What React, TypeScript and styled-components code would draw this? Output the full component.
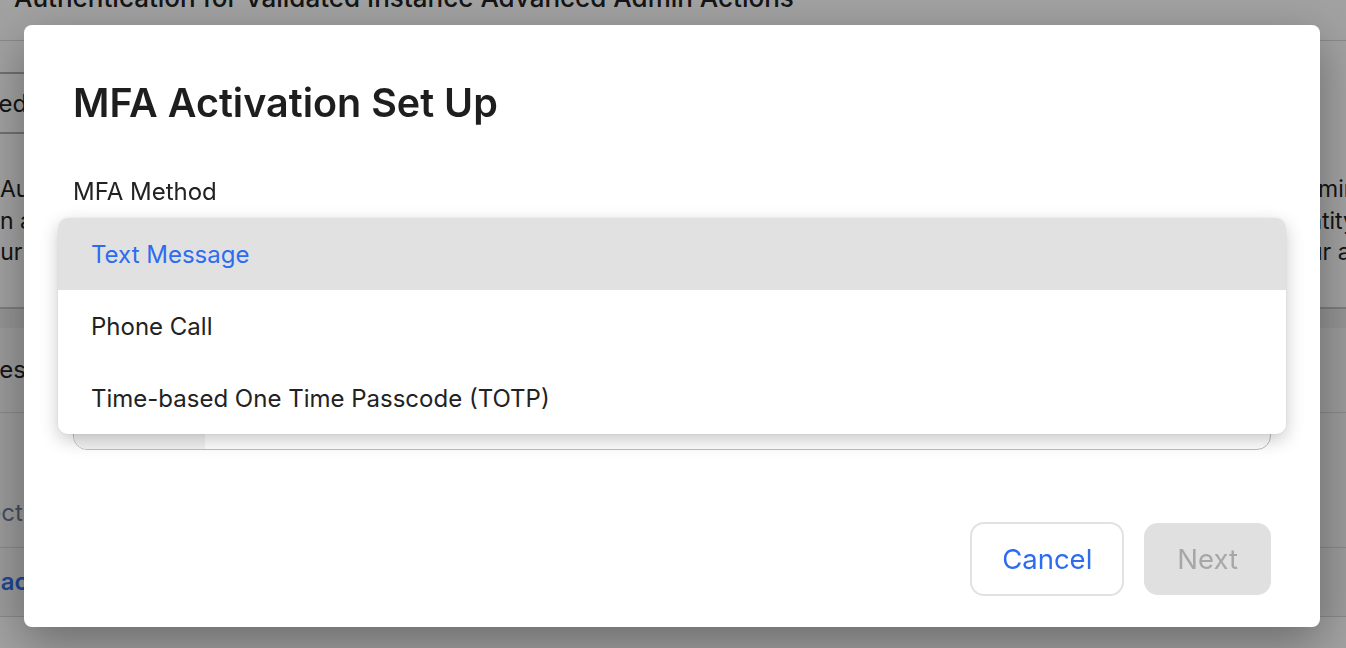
import React from "react";
import styled, { createGlobalStyle } from "styled-components";

const GlobalStyle = createGlobalStyle`
  html, body {
    margin: 0;
    padding: 0;
  }
  body {
    font-family: Inter, "Noto Sans", sans-serif;
    color: #222;
    background: #fff;
    overflow: hidden;
  }
  * {
    box-sizing: border-box;
  }
`;

/* page behind the dialog */

const Page = styled.div`
  width: 1346px;
  height: 648px;
  overflow: hidden;
  background: #fff;
`;

const PageHeader = styled.header`
  height: 41px;
  padding-left: 14px;
  border-bottom: 1px solid #d6d9de;
  overflow: hidden;
`;

const PageTitle = styled.h1`
  margin: -18px 0 0;
  font-size: 26px;
  line-height: 32px;
  font-weight: 500;
  white-space: nowrap;
`;

const StatusRow = styled.div`
  display: flex;
  margin-top: 31px;
`;

const StatusPill = styled.span`
  display: inline-flex;
  align-items: center;
  height: 62px;
  margin-left: -90px;
  padding: 0 24px;
  border: 2px solid #aeb1b8;
  border-radius: 31px;
  font-size: 24px;
`;

const Description = styled.div`
  margin-top: 40px;
  font-size: 23px;
  line-height: 31.5px;
`;

const DescLine = styled.div`
  display: flex;
  justify-content: space-between;
  white-space: nowrap;
`;

const DescPart = styled.span<{ $shift?: number; $end?: number }>`
  margin-left: ${(p) => p.$shift ?? 0}px;
  margin-right: ${(p) => p.$end ?? 0}px;
`;

const TabStrip = styled.div`
  margin-top: 38px;
  height: 21px;
  border-top: 2px solid #c4c7cc;
  background: #ebebeb;
`;

const Table = styled.div`
  background: #f5f5f5;
`;

const Row = styled.div<{ $h: number; $align?: string }>`
  display: flex;
  align-items: ${(p) => p.$align ?? "center"};
  height: ${(p) => p.$h}px;
  padding-bottom: ${(p) => (p.$align === "flex-end" ? 20 : 0)}px;
  border-bottom: 1px solid #d8d8d8;
  font-size: 24px;
  white-space: nowrap;
`;

const Cell = styled.span<{ $shift: number; $tone?: "muted" | "link" }>`
  margin-left: ${(p) => p.$shift}px;
  color: ${(p) =>
    p.$tone === "muted" ? "#6f7d96" : p.$tone === "link" ? "#2f6fea" : "#222"};
  font-weight: ${(p) => (p.$tone === "link" ? 600 : 400)};
`;

/* dialog */

const Overlay = styled.div`
  position: fixed;
  inset: 0;
  display: flex;
  align-items: flex-start;
  padding: 25px 0 0 24px;
  background: rgba(0, 0, 0, 0.37);
`;

const Modal = styled.div`
  display: flex;
  flex-direction: column;
  width: 1296px;
  height: 602px;
  padding: 54px 49px 31px;
  background: #fff;
  border-radius: 8px;
  box-shadow: 0 16px 48px rgba(0, 0, 0, 0.34);
`;

const ModalTitle = styled.h2`
  margin: 0;
  font-size: 39.5px;
  line-height: 48px;
  font-weight: 600;
  color: #1e1e1e;
`;

const Form = styled.div`
  position: relative;
  display: flex;
  flex-direction: column;
  margin-top: 51px;
`;

const Label = styled.label<{ $gap?: number }>`
  display: block;
  margin-top: ${(p) => p.$gap ?? 0}px;
  font-size: 24px;
  line-height: 28px;
  color: #222;
`;

const Field = styled.div`
  display: flex;
  height: 56px;
  margin-top: 14px;
  border: 1.5px solid #bdbdbd;
  border-radius: 14px;
  overflow: hidden;
`;

const CountrySlot = styled.div`
  width: 131px;
  background: #f3f3f3;
`;

const Menu = styled.ul`
  position: absolute;
  top: 40px;
  left: -15px;
  right: -15px;
  margin: 0;
  padding: 0;
  list-style: none;
  background: #fff;
  border-radius: 10px;
  overflow: hidden;
  box-shadow: 0 6px 18px rgba(0, 0, 0, 0.22), 0 0 2px rgba(0, 0, 0, 0.08);
`;

const MenuItem = styled.li<{ $active?: boolean }>`
  display: flex;
  align-items: center;
  height: 72px;
  padding-left: 33px;
  font-size: 24px;
  color: ${(p) => (p.$active ? "#2d6cf0" : "#222")};
  background: ${(p) => (p.$active ? "#e1e1e1" : "#fff")};
`;

const Footer = styled.div`
  display: flex;
  justify-content: flex-end;
  align-items: center;
  gap: 20px;
  margin-top: auto;
`;

const Button = styled.button<{ $variant: "secondary" | "disabled" }>`
  height: ${(p) => (p.$variant === "secondary" ? 74 : 72)}px;
  padding: 0 ${(p) => (p.$variant === "secondary" ? 30 : 33)}px;
  border: ${(p) => (p.$variant === "secondary" ? "2px solid #e2e2e2" : "none")};
  border-radius: 14px;
  background: ${(p) => (p.$variant === "secondary" ? "#fff" : "#e0e0e0")};
  color: ${(p) => (p.$variant === "secondary" ? "#2d6cf0" : "#a7a7a7")};
  font-family: Inter, "Noto Sans", sans-serif;
  font-size: 27.5px;
`;

const methods = ["Text Message", "Phone Call", "Time-based One Time Passcode (TOTP)"];

export default function App() {
  return (
    <>
      <GlobalStyle />
      <Page>
        <PageHeader>
          <PageTitle>Authentication for Validated Instance Advanced Admin Actions</PageTitle>
        </PageHeader>
        <StatusRow>
          <StatusPill>Enabled</StatusPill>
        </StatusRow>
        <Description>
          <DescLine>
            <DescPart>Authentication adds a verification step before</DescPart>
            <DescPart $end={-100}>administrators</DescPart>
          </DescLine>
          <DescLine>
            <DescPart $shift={-13}>an additional factor confirms the</DescPart>
            <DescPart $end={-10}>identity</DescPart>
          </DescLine>
          <DescLine>
            <DescPart $shift={-26}>your account before</DescPart>
            <DescPart $end={-86}>your attempts</DescPart>
          </DescLine>
        </Description>
        <TabStrip />
        <Table>
          <Row $h={85}>
            <Cell $shift={-18}>Description</Cell>
          </Row>
          <Row $h={135} $align="flex-end">
            <Cell $shift={-48} $tone="muted">Select</Cell>
          </Row>
          <Row $h={69}>
            <Cell $shift={-50} $tone="link">Replace</Cell>
          </Row>
        </Table>
      </Page>

      <Overlay>
        <Modal>
          <ModalTitle>MFA Activation Set Up</ModalTitle>
          <Form>
            <Label>MFA Method</Label>
            <Field />
            <Label $gap={76}>Phone Number</Label>
            <Field>
              <CountrySlot />
            </Field>
            <Menu>
              {methods.map((m, i) => (
                <MenuItem key={m} $active={i === 0}>
                  {m}
                </MenuItem>
              ))}
            </Menu>
          </Form>
          <Footer>
            <Button $variant="secondary">Cancel</Button>
            <Button $variant="disabled" disabled>
              Next
            </Button>
          </Footer>
        </Modal>
      </Overlay>
    </>
  );
}
